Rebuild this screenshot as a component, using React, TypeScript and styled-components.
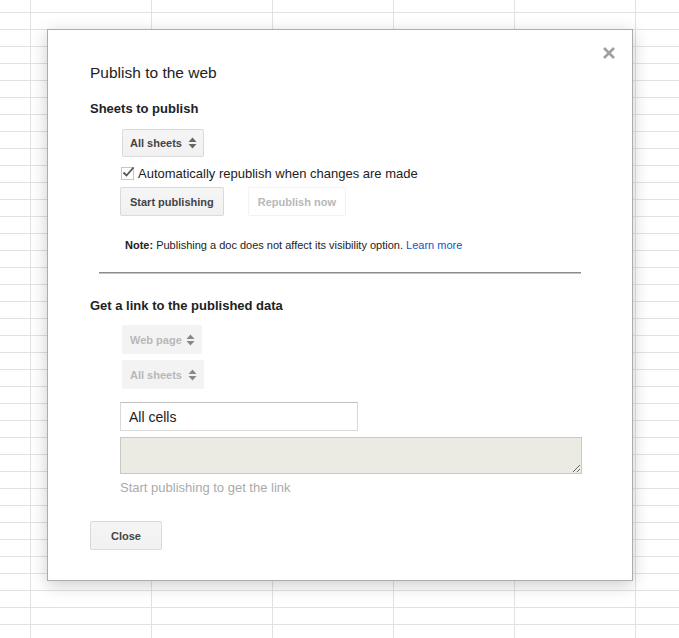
import React from 'react';
import styled, { createGlobalStyle } from 'styled-components';

const GlobalStyle = createGlobalStyle`
  html, body {
    margin: 0;
    padding: 0;
  }
  body {
    font-family: 'Liberation Sans', Arial, sans-serif;
    color: #222;
  }
`;

const Sheet = styled.div`
  width: 679px;
  height: 638px;
  overflow: hidden;
  padding: 29px 0 0 47px;
  box-sizing: border-box;
  background-color: #fff;
  background-image: linear-gradient(to right, #e2e2e2 1px, transparent 1px),
    linear-gradient(to bottom, #e2e2e2 1px, transparent 1px);
  background-size: 121px 100%, 100% 17px;
  background-position: 30px 0, 0 12px;
`;

const Dialog = styled.div`
  position: relative;
  width: 586px;
  height: 552px;
  box-sizing: border-box;
  background: #fff;
  border: 1px solid #acacac;
  box-shadow: 0 4px 16px rgba(0, 0, 0, 0.2);
  padding: 34px 42px 0 42px;
  display: flex;
  flex-direction: column;
`;

const CloseX = styled.button`
  position: absolute;
  top: 16px;
  right: 16px;
  width: 14px;
  height: 14px;
  padding: 0;
  border: 0;
  background: transparent;
  cursor: pointer;
  display: flex;
`;

const Title = styled.div`
  font-size: 15.5px;
  line-height: 18px;
  color: #222;
`;

const Heading = styled.div<{ $top: number }>`
  margin-top: ${(p) => p.$top}px;
  font-size: 13px;
  line-height: 16px;
  font-weight: bold;
  color: #222;
`;

const Indent = styled.div`
  margin-left: 30px;
  display: flex;
  flex-direction: column;
  align-items: flex-start;
`;

const Select = styled.div<{ $disabled?: boolean; $top: number; $w: number }>`
  margin-top: ${(p) => p.$top}px;
  margin-left: 2px;
  width: ${(p) => p.$w}px;
  height: ${(p) => (p.$disabled ? 29 : 28)}px;
  box-sizing: border-box;
  padding: 0 6px 0 7px;
  display: flex;
  align-items: center;
  justify-content: space-between;
  border-radius: 2px;
  border: 1px solid ${(p) => (p.$disabled ? '#f3f3f3' : 'rgba(0, 0, 0, 0.1)')};
  background: ${(p) => (p.$disabled ? '#f3f3f3' : 'linear-gradient(#f5f5f5, #f1f1f1)')};
  color: ${(p) => (p.$disabled ? '#b8b8b8' : '#444')};
  font-size: 11px;
  font-weight: bold;
  cursor: default;
`;

const CheckRow = styled.label`
  margin-top: 7px;
  margin-left: 1px;
  height: 18px;
  display: flex;
  align-items: center;
  font-size: 13px;
  color: #222;
`;

const Box = styled.span`
  width: 11px;
  height: 11px;
  border: 1px solid #c6c6c6;
  background: #fff;
  margin-right: 4px;
  position: relative;
  display: inline-block;
`;

const ButtonRow = styled.div`
  margin-top: 5px;
  display: flex;
  gap: 24px;
`;

const Button = styled.button<{ $disabled?: boolean }>`
  height: 29px;
  min-width: 72px;
  box-sizing: border-box;
  padding: 0 9px;
  border-radius: 2px;
  font-family: 'Liberation Sans', Arial, sans-serif;
  font-size: 11px;
  font-weight: bold;
  border: 1px solid ${(p) => (p.$disabled ? 'rgba(0, 0, 0, 0.05)' : 'rgba(0, 0, 0, 0.1)')};
  background: ${(p) => (p.$disabled ? '#fff' : 'linear-gradient(#f5f5f5, #f1f1f1)')};
  color: ${(p) => (p.$disabled ? '#b8b8b8' : '#444')};
  cursor: ${(p) => (p.$disabled ? 'default' : 'pointer')};
`;

const Note = styled.div`
  margin: 22px 0 0 35px;
  font-size: 11px;
  line-height: 14px;
  color: #222;

  b {
    font-weight: bold;
  }
  a {
    color: #15c;
    text-decoration: none;
  }
`;

const Divider = styled.div`
  margin: 20px 9px 0 9px;
  height: 0;
  border-top: 1px solid #8c8c8c;
  border-bottom: 1px solid #c4c4c4;
`;

const CellsInput = styled.input`
  margin-top: 13px;
  width: 238px;
  height: 29px;
  box-sizing: border-box;
  padding: 1px 8px 0 8px;
  border: 1px solid #d9d9d9;
  border-top-color: #c0c0c0;
  font-family: 'Liberation Sans', Arial, sans-serif;
  font-size: 14px;
  color: #222;
  outline: none;
`;

const LinkArea = styled.textarea`
  margin-top: 6px;
  width: 462px;
  height: 37px;
  box-sizing: border-box;
  border: 1px solid #c8c8c8;
  background: #ebebe4;
  resize: both;
  font-family: 'Liberation Sans', Arial, sans-serif;
  outline: none;
`;

const Hint = styled.div`
  margin-top: 6px;
  font-size: 13px;
  line-height: 16px;
  color: #aaa;
`;

const Footer = styled.div`
  margin-top: 25px;
  display: flex;
`;

const UpDown = ({ color }: { color: string }) => (
  <svg width="9" height="12" viewBox="0 0 9 12">
    <path d="M4.5 0.5 L8.5 5 L0.5 5 Z" fill={color} />
    <path d="M4.5 11.5 L8.5 7 L0.5 7 Z" fill={color} />
  </svg>
);

const App: React.FC = () => {
  return (
    <>
      <GlobalStyle />
      <Sheet>
        <Dialog>
          <CloseX aria-label="Close">
            <svg width="14" height="14" viewBox="0 0 14 14">
              <path d="M2 2 L12 12 M12 2 L2 12" stroke="#a0a0a0" strokeWidth="2.6" />
            </svg>
          </CloseX>
          <Title>Publish to the web</Title>
          <Heading $top={19}>Sheets to publish</Heading>
          <Indent>
            <Select $top={12} $w={82}>
              All sheets
              <UpDown color="#666" />
            </Select>
            <CheckRow>
              <Box>
                <svg width="13" height="12" viewBox="0 0 13 12" style={{ position: 'absolute', left: 0, top: -2 }}>
                  <path d="M1.5 6.5 L4.5 9.5 L11.5 1.5" stroke="#555" strokeWidth="1.8" fill="none" />
                </svg>
              </Box>
              Automatically republish when changes are made
            </CheckRow>
            <ButtonRow>
              <Button>Start publishing</Button>
              <Button $disabled>Republish now</Button>
            </ButtonRow>
          </Indent>
          <Note>
            <b>Note:</b> Publishing a doc does not affect its visibility option. <a href="#">Learn more</a>
          </Note>
          <Divider />
          <Heading $top={24}>Get a link to the published data</Heading>
          <Indent>
            <Select $disabled $top={11} $w={80}>
              Web page
              <UpDown color="#888" />
            </Select>
            <Select $disabled $top={6} $w={82}>
              All sheets
              <UpDown color="#888" />
            </Select>
            <CellsInput defaultValue="All cells" />
            <LinkArea readOnly />
            <Hint>Start publishing to get the link</Hint>
          </Indent>
          <Footer>
            <Button>Close</Button>
          </Footer>
        </Dialog>
      </Sheet>
    </>
  );
};

export default App;
